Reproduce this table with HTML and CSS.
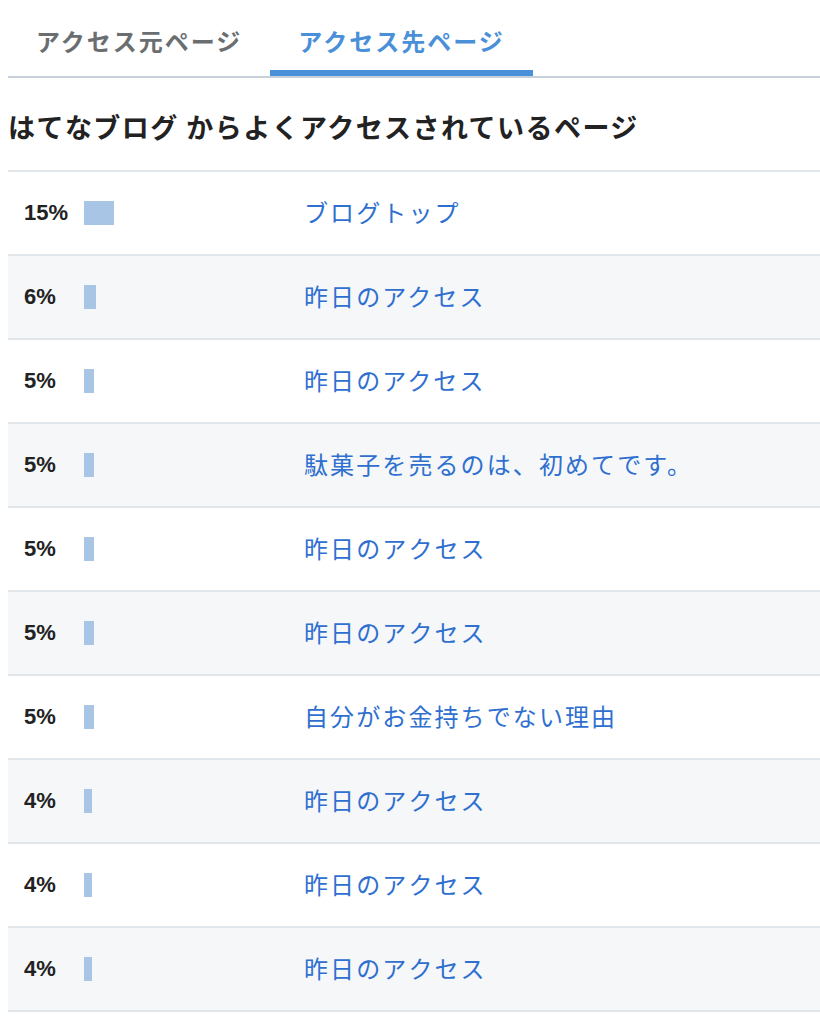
FILE: index.html
```html
<!DOCTYPE html>
<html lang="ja">
<head>
<meta charset="utf-8">
<link rel="stylesheet" href="styles.css">
</head>
<body>
<div class="tabs">
  <div class="tab">アクセス元ページ</div>
  <div class="tab active">アクセス先ページ</div>
</div>
<h2 class="title">はてなブログ からよくアクセスされているページ</h2>
<div class="list">
  <div class="row"><span class="pct">15%</span><span class="barcell"><span class="bar" style="width:30px"></span></span><a class="link">ブログトップ</a></div>
  <div class="row"><span class="pct">6%</span><span class="barcell"><span class="bar" style="width:12px"></span></span><a class="link">昨日のアクセス</a></div>
  <div class="row"><span class="pct">5%</span><span class="barcell"><span class="bar" style="width:10px"></span></span><a class="link">昨日のアクセス</a></div>
  <div class="row"><span class="pct">5%</span><span class="barcell"><span class="bar" style="width:10px"></span></span><a class="link">駄菓子を売るのは、初めてです。</a></div>
  <div class="row"><span class="pct">5%</span><span class="barcell"><span class="bar" style="width:10px"></span></span><a class="link">昨日のアクセス</a></div>
  <div class="row"><span class="pct">5%</span><span class="barcell"><span class="bar" style="width:10px"></span></span><a class="link">昨日のアクセス</a></div>
  <div class="row"><span class="pct">5%</span><span class="barcell"><span class="bar" style="width:10px"></span></span><a class="link">自分がお金持ちでない理由</a></div>
  <div class="row"><span class="pct">4%</span><span class="barcell"><span class="bar" style="width:8px"></span></span><a class="link">昨日のアクセス</a></div>
  <div class="row"><span class="pct">4%</span><span class="barcell"><span class="bar" style="width:8px"></span></span><a class="link">昨日のアクセス</a></div>
  <div class="row"><span class="pct">4%</span><span class="barcell"><span class="bar" style="width:8px"></span></span><a class="link">昨日のアクセス</a></div>
</div>
</body>
</html>
```
FILE: styles.css
```css
body {
  margin: 8px 0 8px 8px;
  background: #fff;
  font-family: "Noto Sans CJK JP", "Noto Sans", sans-serif;
  color: #222;
}
.tabs {
  display: flex;
  border-bottom: 2px solid #c8d1d9;
}
.tab {
  padding: 15px 28px 11px;
  font-size: 24px;
  line-height: 36px;
  font-weight: bold;
  letter-spacing: 2px;
  color: #6b6e71;
  border-bottom: 6px solid transparent;
}
.tab.active {
  color: #4a90d9;
  border-bottom-color: #4a90d9;
}
.title {
  margin: 30px 0 24px;
  font-size: 27px;
  line-height: 38px;
  font-weight: bold;
  letter-spacing: 1.45px;
  color: #222;
}
.list {
  border-top: 2px solid #e1e6ea;
}
.row {
  display: flex;
  align-items: center;
  height: 82px;
  padding-left: 16px;
  border-bottom: 2px solid #e1e6ea;
}
.row:nth-child(even) {
  background: #f5f7f9;
}
.pct {
  width: 60px;
  font-family: "Liberation Sans", Arial, sans-serif;
  font-weight: bold;
  font-size: 22px;
  color: #222;
}
.barcell {
  width: 220px;
  display: flex;
  align-items: center;
}
.bar {
  display: block;
  height: 24px;
  background: #a9c5e5;
}
.link {
  font-size: 24px;
  line-height: 32px;
  letter-spacing: 2.1px;
  color: #2f6fcf;
  text-decoration: none;
  margin-top: -3px;
}
```
